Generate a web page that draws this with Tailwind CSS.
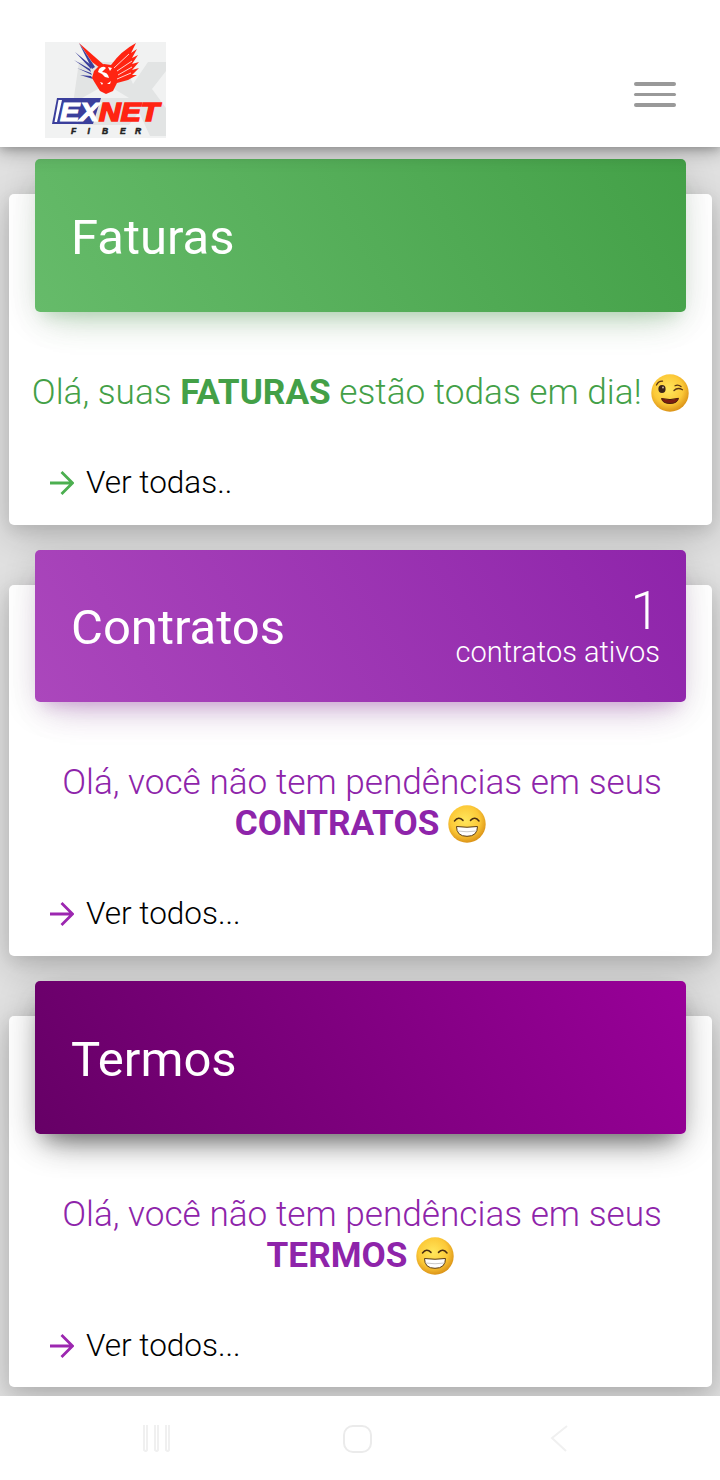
<!DOCTYPE html>
<html lang="pt-BR">
<head>
<meta charset="utf-8">
<title>Exnet Fiber</title>
<script src="https://cdn.jsdelivr.net/npm/@tailwindcss/browser@4"></script>
</head>
<body class="h-[1480px] w-[720px] overflow-hidden bg-[#e0e0e0] font-['Roboto',sans-serif] font-light">
<svg width="0" height="0" class="absolute">
  <defs>
    <radialGradient id="face" cx=".45" cy=".4" r=".6"><stop offset="0" stop-color="#ffe75c"/><stop offset=".65" stop-color="#fcc938"/><stop offset="1" stop-color="#dc9418"/></radialGradient>
    <symbol id="grin" viewBox="0 0 38 38">
      <circle cx="19" cy="19" r="18.7" fill="url(#face)"/>
      <path d="M6.5 16q4-5 8.500-.6M22.500 15.400q4.500-4.400 8.500.6" fill="none" stroke="#4b2e12" stroke-width="1.500" stroke-linecap="round"/>
      <path d="M8.500 21.500q10.500 1.500 21 0q0 9.800-10.500 9.800t-10.500-9.800z" fill="#fff" stroke="#5a3b12" stroke-width="1"/>
      <path d="M9.500 26q9.500 1.500 19 0" fill="none" stroke="#bbb" stroke-width=".8"/>
    </symbol>
    <symbol id="wink" viewBox="0 0 38 38">
      <circle cx="19" cy="19" r="18.700" fill="url(#face)"/>
      <ellipse cx="11" cy="15" rx="3.600" ry="3.900" fill="#3a2418"/><circle cx="12" cy="13.500" r="1" fill="#c9b6a0"/>
      <path d="M5.500 11q2-4 6-3.800M23 16.500q3.500-3.600 8.500-.8M24 11.800q3-1.600 6 .8" fill="none" stroke="#5a3514" stroke-width="1.300" stroke-linecap="round"/>
      <path d="M10.500 24.500q8.500 2.200 17-.2q-1 5.200-8.500 5.200t-8.500-5z" fill="#7d1d10" stroke="#4b1d0b" stroke-width="1"/>
    </symbol>
    <symbol id="arrow" viewBox="0 0 24 24"><path d="M0 12H22.500M11.500 1L22.500 12L11.500 23" fill="none" stroke="currentColor" stroke-width="2.800"/></symbol>
  </defs>
</svg>
<div class="flex h-full flex-col">
  <header class="relative z-10 flex h-[147px] shrink-0 items-start justify-between bg-white pr-11 pl-[45px] shadow-[0_4px_18px_rgba(0,0,0,0.3),0_2px_8px_rgba(0,0,0,0.16)]">
    <svg class="mt-[42px]" width="121" height="96" viewBox="0 0 121 96">
      <rect width="121" height="96" fill="#f1f2f2"/>
      <path d="M34 20H78L88 42L103 20H121V29L107 47L121 66V94H105L94 70L84 83H34L26 76z" fill="#e2e4e4"/>
      <path d="M53 47l13-2 18 11H37z" fill="#f1f2f2"/>
      <path d="M34 1L59 23L55 26L47 20z" fill="#ff2412"/>
      <path d="M34 1L50 25L47 27z" fill="#3b3f9c"/>
      <path d="M30 10L47 24L46 27zM29 18L45 27L46 30zM32 26L46 31L47 33zM35 33L46 34L48 37z" fill="#3b3f9c"/>
      <path d="M66 23Q76 9 91 1L86 11L92 7L87 16L93 13L87 22L94 20L87 28L94 26L87 33L92 33L83 38L72 41L68 49L61 52L55 49L50 41L47 36L49 29L53 25L59 22z" fill="#ff2412"/>
      <path d="M54 27Q58 23 61 26L57 30Q63 30 64 36L60 35L57 32L53 30zM63 25L67 26L65 29zM55 40L58 41L57 43zM62 42L66 39L65 42z" fill="#fff"/>
      <path d="M69 26L84 12M72 29L87 19M73 33L87 25M72 37L86 31" stroke="#fff" stroke-width=".8"/>
      <path d="M12 56H56L48 82H7z" fill="#3b3f9c"/>
      <path d="M13.500 58H17L12 80H9.500z" fill="#fff"/>
      <g font-family="Liberation Sans" font-weight="bold">
        <text x="15" y="79" font-size="25" font-style="italic" fill="#fff" stroke="#fff" stroke-width="1.100" textLength="39" lengthAdjust="spacingAndGlyphs">EX</text>
        <text x="54" y="79" font-size="25" font-style="italic" fill="#ff2412" stroke="#ff2412" stroke-width="1.600" textLength="60" lengthAdjust="spacingAndGlyphs">NET</text>
        <text y="92" x="26 42.500 57 75 90" font-size="8.500" font-style="italic" fill="#222" stroke="#222" stroke-width=".5">FIBER</text>
      </g>
    </svg>
    <div class="mt-[82px] flex w-[42px] flex-col gap-[7px]">
      <i class="h-1 rounded-sm bg-[#999]"></i><i class="h-[3px] rounded-sm bg-[#999]"></i><i class="h-1 rounded-sm bg-[#999]"></i>
    </div>
  </header>

  <main class="flex h-[1249px] shrink-0 flex-col gap-[60px] overflow-hidden pt-[47px] pr-2 pl-[9px]">
    <section class="flex h-[331px] shrink-0 flex-col rounded-[5px] bg-white px-[26px] shadow-[0_10px_36px_rgba(0,0,0,0.18),0_5px_16px_rgba(0,0,0,0.09)]">
      <div class="-mt-[35px] flex h-[153px] shrink-0 items-center rounded-[5px] bg-[linear-gradient(60deg,#66bb6a,#43a047)] px-9 shadow-[0_21px_35px_-18px_rgba(76,175,80,0.28),0_7px_35px_rgba(0,0,0,0.12),0_12px_14px_-9px_rgba(76,175,80,0.2)]">
        <h2 class="pt-1 text-[49px] font-normal text-white">Faturas</h2>
      </div>
      <p class="-mx-3 mt-[60px] flex items-center justify-center text-[35.2px] leading-[41px] whitespace-pre text-[#43a047]"><span>Olá, suas <b class="font-bold">FATURAS</b> estão todas em dia! </span><svg class="ml-px" width="38" height="38"><use href="#wink"/></svg></p>
      <a class="mt-[50px] flex items-center pl-[15px] text-[31.500px] leading-[40px] text-black"><svg class="mr-3 text-[#4caf50]" width="24" height="24"><use href="#arrow"/></svg>Ver todas..</a>
    </section>

    <section class="flex h-[371px] shrink-0 flex-col rounded-[5px] bg-white px-[26px] shadow-[0_10px_36px_rgba(0,0,0,0.18),0_5px_16px_rgba(0,0,0,0.09)]">
      <div class="-mt-[35px] flex h-[152px] shrink-0 items-center justify-between rounded-[5px] bg-[linear-gradient(60deg,#ab47bc,#8e24aa)] pr-[26px] pl-9 text-white shadow-[0_21px_35px_-18px_rgba(156,39,176,0.28),0_7px_35px_rgba(0,0,0,0.12),0_12px_14px_-9px_rgba(156,39,176,0.2)]">
        <h2 class="pt-1 text-[49px] font-normal">Contratos</h2>
        <div class="flex flex-col items-end pt-1"><span class="text-[53px] leading-[48px]">1</span><span class="text-[29px] leading-[34px]">contratos ativos</span></div>
      </div>
      <p class="mt-[60px] pl-[3px] text-center text-[35.2px] leading-[41px] text-[#8e24aa]">Olá, você não tem pendências em seus</p>
      <p class="flex h-[41px] items-center justify-center text-[35.2px] leading-[41px] text-[#8e24aa]"><b class="mr-[9px] font-bold">CONTRATOS</b><svg width="38" height="38"><use href="#grin"/></svg></p>
      <a class="mt-[50px] flex items-center pl-[15px] text-[31.500px] leading-[40px] text-black"><svg class="mr-3 text-[#9c27b0]" width="24" height="24"><use href="#arrow"/></svg>Ver todos...</a>
    </section>

    <section class="flex h-[371px] shrink-0 flex-col rounded-[5px] bg-white px-[26px] shadow-[0_10px_36px_rgba(0,0,0,0.18),0_5px_16px_rgba(0,0,0,0.09)]">
      <div class="-mt-[35px] flex h-[153px] shrink-0 items-center rounded-[5px] bg-[linear-gradient(60deg,#660066,#990099)] px-9 shadow-[0_18px_32px_-14px_rgba(0,0,0,0.45),0_7px_40px_rgba(0,0,0,0.16),0_14px_18px_-9px_rgba(0,0,0,0.25)]">
        <h2 class="pt-1 text-[49px] font-normal text-white">Termos</h2>
      </div>
      <p class="mt-[60px] pl-[3px] text-center text-[35.2px] leading-[41px] text-[#8e24aa]">Olá, você não tem pendências em seus</p>
      <p class="flex h-[41px] items-center justify-center text-[35.2px] leading-[41px] text-[#8e24aa]"><b class="mr-[9px] font-bold">TERMOS</b><svg width="38" height="38"><use href="#grin"/></svg></p>
      <a class="mt-[50px] flex items-center pl-[15px] text-[31.500px] leading-[40px] text-black"><svg class="mr-3 text-[#9c27b0]" width="24" height="24"><use href="#arrow"/></svg>Ver todos...</a>
    </section>
  </main>

  <nav class="relative h-[84px] shrink-0 bg-white">
    <svg width="720" height="84" fill="none" stroke="#f0f0f0" stroke-width="2">
      <path d="M144 29v25q2 2 3 0V29M155 29v25q2 2 3 0V29M166 29v25q2 2 3 0V29"/>
      <rect x="344" y="30" width="27" height="26" rx="9" stroke="#ebebeb"/>
      <path d="M567 30L552 42L566 55"/>
    </svg>
  </nav>
</div>
</body>
</html>
